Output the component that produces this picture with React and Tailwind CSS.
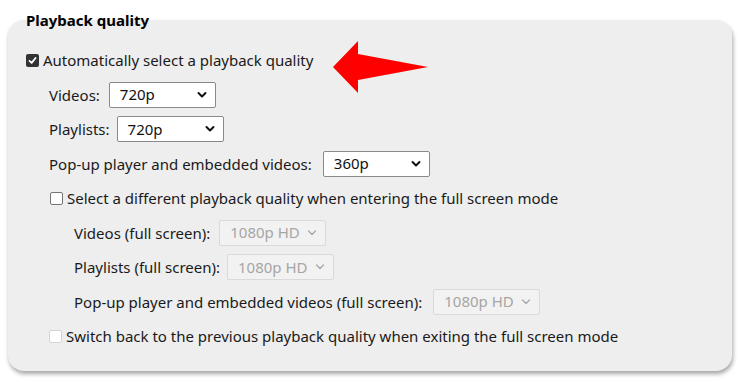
import React from 'react';

function Chevron({ disabled }) {
  return (
    <svg width="10" height="7" viewBox="0 0 10 7" className="absolute right-[8px] top-1/2 -translate-y-1/2">
      <path
        d="M1.5 1.5 L5 5 L8.5 1.5"
        fill="none"
        stroke={disabled ? '#a8a8a8' : '#111111'}
        strokeWidth={disabled ? 1.4 : 2}
        strokeLinecap="round"
        strokeLinejoin="round"
      />
    </svg>
  );
}

function Select({ value, disabled, className = '' }) {
  return (
    <div
      className={
        'relative h-[26px] w-[107px] rounded-[2px] border pl-[10px] flex items-center ' +
        (disabled
          ? 'border-[#dadada] bg-[#f2f2f2] text-[#a6a6a6] '
          : 'border-[#8a8a8a] bg-white text-[#111111] ') +
        className
      }
    >
      <span className="leading-none">{value}</span>
      <Chevron disabled={disabled} />
    </div>
  );
}

function Checkbox({ checked, disabled }) {
  if (checked) {
    return (
      <div className="w-[13px] h-[13px] rounded-[2px] bg-[#333333] flex items-center justify-center shrink-0">
        <svg width="9" height="9" viewBox="0 0 9 9">
          <path d="M1.5 4.8 L3.6 6.8 L7.6 2" fill="none" stroke="white" strokeWidth="1.8" strokeLinecap="round" strokeLinejoin="round" />
        </svg>
      </div>
    );
  }
  return (
    <div
      className={
        'w-[13px] h-[13px] rounded-[2px] border bg-white shrink-0 ' +
        (disabled ? 'border-[#d4d4d4] bg-[#f4f4f4]' : 'border-[#767676]')
      }
    />
  );
}

function Row({ children, className = '' }) {
  return <div className={'h-[34.5px] flex items-center ' + className}>{children}</div>;
}

export default function App() {
  return (
    <div
      className="relative w-[739px] h-[382px] bg-white pt-[10px] pl-[8px] text-[#1a1a1a] text-[15px]"
      style={{ fontFamily: '"Segoe UI", "Noto Sans", sans-serif' }}
    >
      <div className="relative z-10 pl-[18px] text-[15px] font-bold leading-[20px] text-black">Playback quality</div>
      <div className="-mt-[10px] w-[724px] h-[351px] rounded-[16px] bg-[#eeeeee] shadow-[1px_3px_4px_rgba(0,0,0,0.35)] pl-[18px] pt-[23px]">
        <Row>
          <Checkbox checked />
          <span className="ml-[4px]">Automatically select a playback quality</span>
        </Row>
        <Row className="pl-[23px]">
          <span>Videos:</span>
          <Select value="720p" className="ml-[9px]" />
        </Row>
        <Row className="pl-[23px]">
          <span>Playlists:</span>
          <Select value="720p" className="ml-[7px]" />
        </Row>
        <Row className="pl-[23px]">
          <span>Pop-up player and embedded videos:</span>
          <Select value="360p" className="ml-[11px]" />
        </Row>
        <Row className="pl-[24px]">
          <Checkbox />
          <span className="ml-[4px]">Select a different playback quality when entering the full screen mode</span>
        </Row>
        <Row className="pl-[48px]">
          <span>Videos (full screen):</span>
          <Select value="1080p HD" disabled className="ml-[9px]" />
        </Row>
        <Row className="pl-[48px]">
          <span>Playlists (full screen):</span>
          <Select value="1080p HD" disabled className="ml-[7px]" />
        </Row>
        <Row className="pl-[48px]">
          <span>Pop-up player and embedded videos (full screen):</span>
          <Select value="1080p HD" disabled className="ml-[11px]" />
        </Row>
        <Row className="pl-[23px]">
          <Checkbox disabled />
          <span className="ml-[4px]">Switch back to the previous playback quality when exiting the full screen mode</span>
        </Row>
      </div>
      <svg className="absolute left-[330px] top-[38px]" width="100" height="58" viewBox="330 38 100 58">
        <polygon points="333,67 358,41 358,54 428,67 358,80 358,93" fill="#ff0000" />
      </svg>
    </div>
  );
}
